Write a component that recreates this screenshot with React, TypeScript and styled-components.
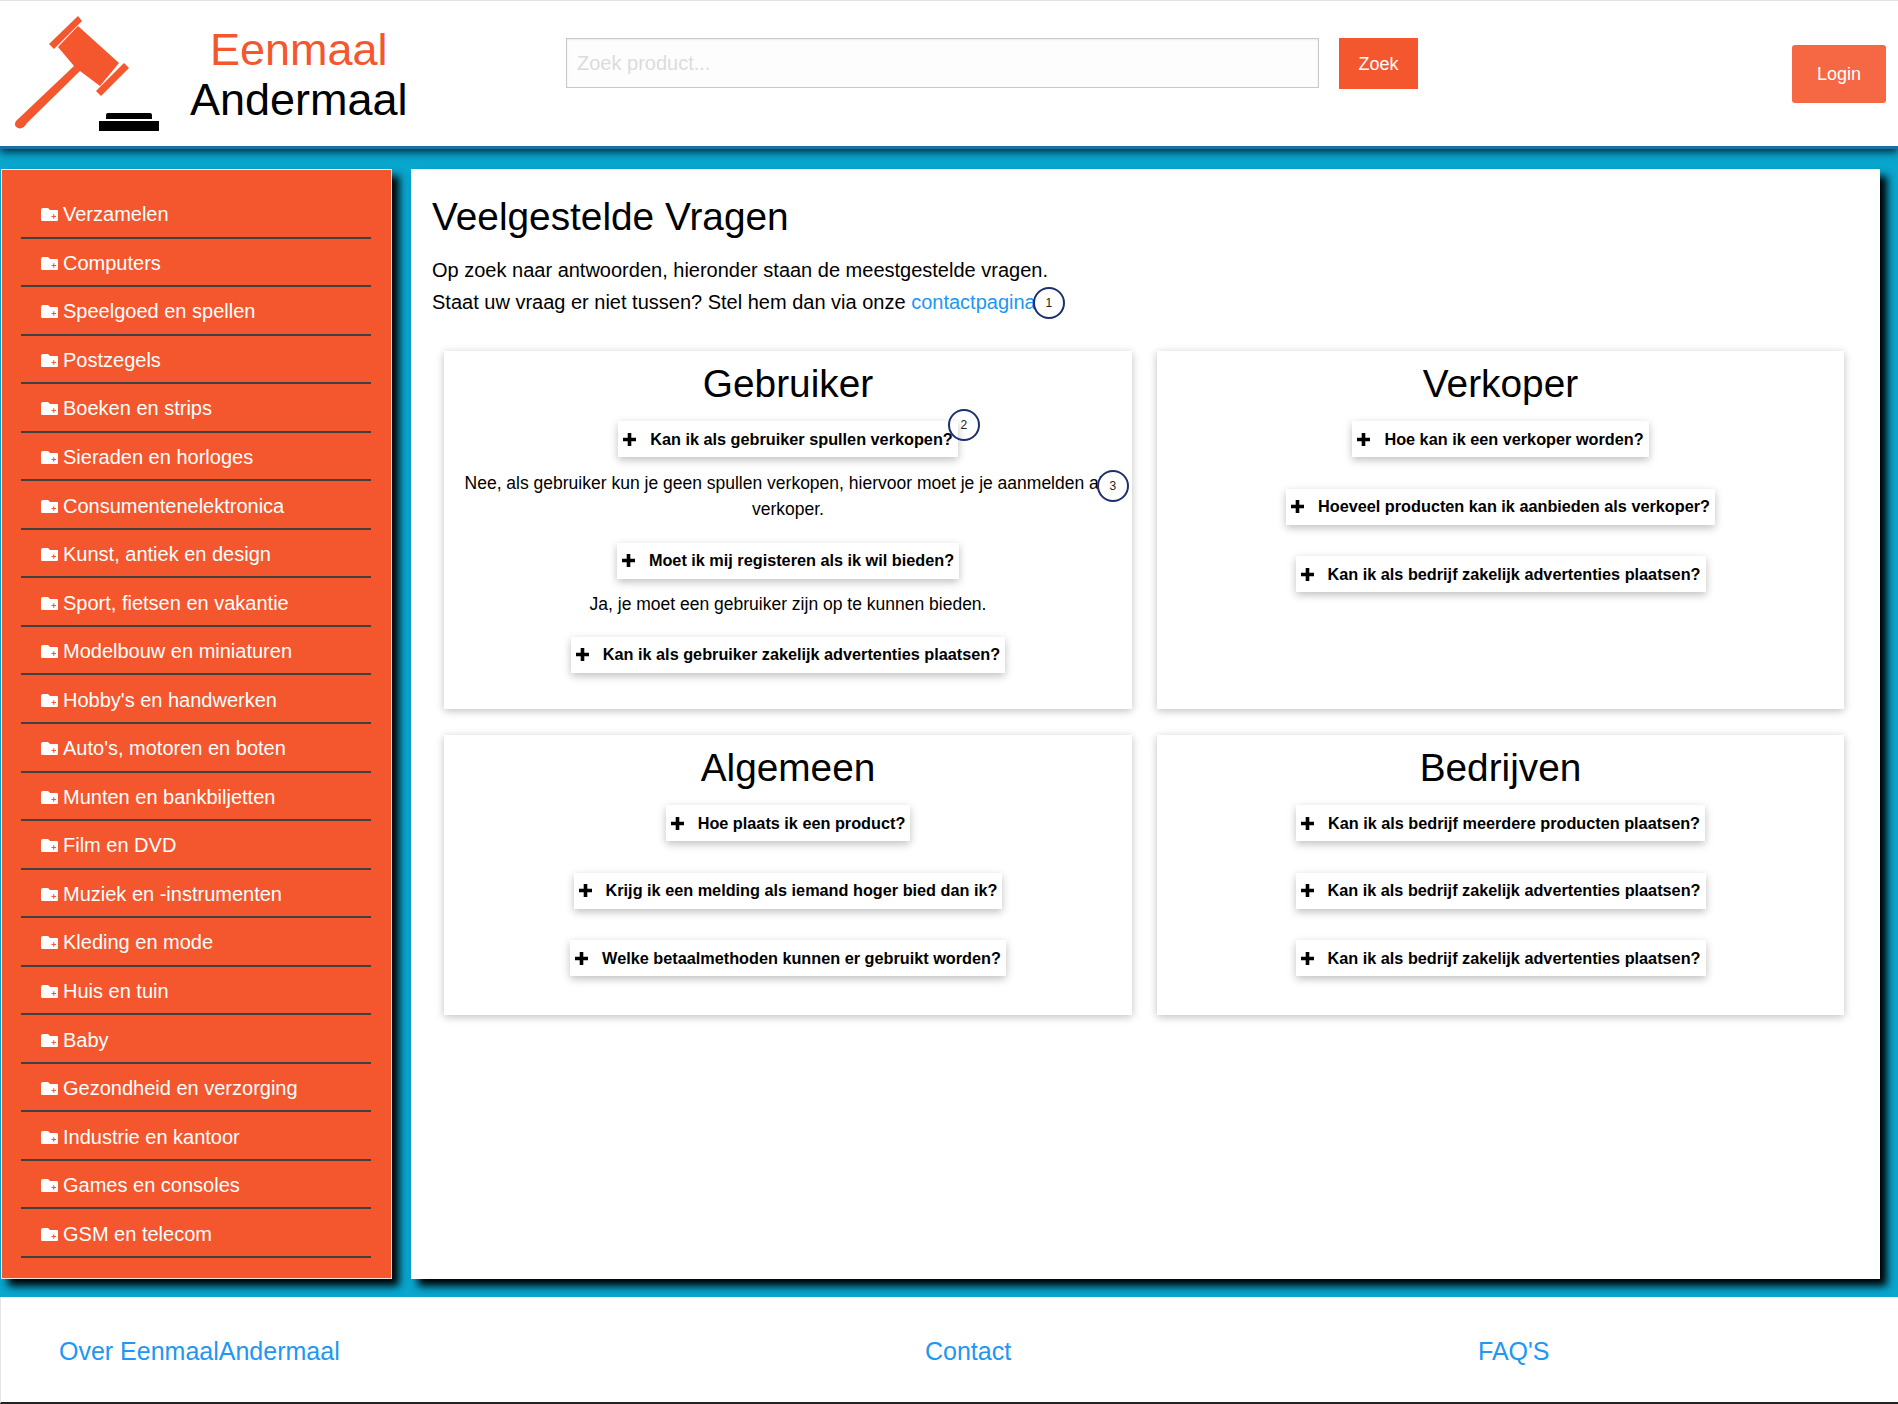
import React from "react";
import styled, { createGlobalStyle } from "styled-components";

const GlobalStyle = createGlobalStyle`
  html, body {
    margin: 0;
    padding: 0;
    background: #fff;
    font-family: "Liberation Sans", Arial, sans-serif;
  }
`;

const Page = styled.div`
  width: 1898px;
  height: 1404px;
  display: flex;
  flex-direction: column;
  overflow: hidden;
`;

const Header = styled.header`
  height: 149px;
  box-sizing: border-box;
  border-top: 1px solid #e2e2e2;
  border-bottom: 3px solid #1e6ea6;
  display: flex;
  align-items: flex-start;
  background: #fff;
  position: relative;
  z-index: 2;
  box-shadow: 0 3px 8px rgba(0, 0, 0, 0.75);
`;

const LogoBlock = styled.div`
  width: 415px;
  height: 141px;
  display: flex;
  flex: none;
`;

const Gavel = styled.svg`
  width: 160px;
  height: 132px;
  flex: none;
`;

const Brand = styled.div`
  margin: 24px 0 0 30px;
  font-size: 45px;
  line-height: 50px;
  text-align: center;
`;

const BrandTop = styled.div`
  color: #f4572d;
`;

const SearchForm = styled.form`
  display: flex;
  align-items: flex-start;
  margin: 37px 0 0 151px;
`;

const SearchInput = styled.input`
  width: 753px;
  height: 50px;
  box-sizing: border-box;
  padding: 0 10px;
  border: 1px solid #c8c8c8;
  background: #fdfdfd;
  box-shadow: inset 0 1px 2px rgba(0, 0, 0, 0.08);
  font-family: inherit;
  font-size: 20px;
  outline: none;
  &::placeholder {
    color: #dcdcdc;
  }
`;

const SearchButton = styled.button`
  width: 79px;
  height: 51px;
  margin-left: 20px;
  padding-top: 2px;
  border: none;
  background: #f4572d;
  color: #fff;
  font-family: inherit;
  font-size: 18px;
`;

const LoginButton = styled.button`
  width: 94px;
  height: 58px;
  margin: 44px 12px 0 auto;
  border: none;
  border-radius: 3px;
  background: #f66844;
  color: #fff;
  font-family: inherit;
  font-size: 18px;
`;

const Body = styled.div`
  height: 1148px;
  box-sizing: border-box;
  padding: 20px 18px 0 1px;
  background: #09a6ce;
  display: flex;
  align-items: flex-start;
  gap: 19px;
`;

const Sidebar = styled.nav`
  width: 391px;
  height: 1110px;
  box-sizing: border-box;
  padding: 20px 20px 0 19px;
  background: #f4572d;
  border: 1px solid #f7e4dc;
  box-shadow: 7px 7px 8px #000;
  flex: none;
`;

const CategoryRow = styled.div`
  height: 48.55px;
  box-sizing: border-box;
  padding: 3px 0 0 20px;
  display: flex;
  align-items: center;
  gap: 5px;
  color: #fff;
  font-size: 20px;
  border-bottom: 2px solid #404040;
`;

const FolderIcon = () => (
  <svg width="17" height="13" viewBox="0 0 17 13">
    <path d="M0 2 Q0 0 2 0 H7 L9 2 H16 Q17 2 17 3 V12 Q17 13 16 13 H1 Q0 13 0 12 Z" fill="#fff" />
    <path d="M10.5 8.5 H15 M12.75 6.2 V10.8" stroke="#f4572d" strokeWidth="1.1" />
  </svg>
);

const PlusIcon = () => (
  <svg width="13" height="13" viewBox="0 0 13 13">
    <path d="M4.7 0 H8.3 V4.7 H13 V8.3 H8.3 V13 H4.7 V8.3 H0 V4.7 H4.7 Z" fill="#000" />
  </svg>
);

const Main = styled.main`
  width: 1469px;
  height: 1110px;
  box-sizing: border-box;
  padding: 25px 21px 0 21px;
  background: #fff;
  box-shadow: 7px 7px 8px #000;
  flex: none;
`;

const PageTitle = styled.h1`
  margin: 0 0 14px;
  font-size: 38.8px;
  line-height: 46px;
  font-weight: 400;
  color: #000;
`;

const Intro = styled.p`
  margin: 0;
  font-size: 20px;
  line-height: 32px;
  color: #000;
`;

const Link = styled.a`
  color: #2196f3;
`;

const Anchor = styled.span`
  position: relative;
`;

const Marker = styled.span<{ $top: number; $left: number }>`
  position: absolute;
  top: ${(p) => p.$top}px;
  left: ${(p) => p.$left}px;
  width: 32px;
  height: 32px;
  box-sizing: border-box;
  border: 2px solid #1c2f6e;
  border-radius: 50%;
  background: #fff;
  display: flex;
  align-items: center;
  justify-content: center;
  font-size: 12px;
  line-height: 1;
  color: #222;
  font-weight: 400;
`;

const QuestionMarker = styled(Marker)`
  left: auto;
  right: -22px;
  background: transparent;
`;

const CardGrid = styled.div`
  display: grid;
  grid-template-columns: 688px 687px;
  grid-template-rows: 358px 280px;
  gap: 26px 25px;
  margin: 33px 0 0 12px;
`;

const Card = styled.section`
  background: #fff;
  box-shadow: 0 2px 8px rgba(0, 0, 0, 0.25);
  padding: 10px 20px 0;
  box-sizing: border-box;
  text-align: center;
`;

const CardTitle = styled.h2`
  margin: 0 0 14px;
  font-size: 38.8px;
  line-height: 46px;
  font-weight: 400;
  color: #000;
`;

const Question = styled.div<{ $open?: boolean }>`
  display: flex;
  justify-content: center;
  margin-bottom: ${(p) => (p.$open ? "12px" : "31.5px")};
`;

const QuestionButton = styled.button`
  position: relative;
  height: 36px;
  padding: 0 5px;
  display: flex;
  align-items: center;
  gap: 14px;
  border: none;
  background: #fff;
  box-shadow: 0 3px 8px rgba(0, 0, 0, 0.25);
  font-family: inherit;
  font-size: 16.25px;
  font-weight: 700;
  color: #000;
  white-space: nowrap;
`;

const Answer = styled.p`
  margin: 0 0 20px;
  font-size: 17.5px;
  line-height: 26.25px;
  color: #000;
  &:first-of-type {
    margin-top: 13px;
  }
`;

const Footer = styled.footer`
  height: 107px;
  box-sizing: border-box;
  border-left: 1px solid #e5e5e5;
  border-bottom: 2px solid #222;
  padding: 39px 0 0 58px;
  display: flex;
  background: #fff;
  font-size: 25px;
  line-height: 30px;
`;

const FooterLink = styled.a<{ $width: number }>`
  width: ${(p) => p.$width}px;
  color: #2196f3;
`;

const categories = [
  "Verzamelen",
  "Computers",
  "Speelgoed en spellen",
  "Postzegels",
  "Boeken en strips",
  "Sieraden en horloges",
  "Consumentenelektronica",
  "Kunst, antiek en design",
  "Sport, fietsen en vakantie",
  "Modelbouw en miniaturen",
  "Hobby's en handwerken",
  "Auto's, motoren en boten",
  "Munten en bankbiljetten",
  "Film en DVD",
  "Muziek en -instrumenten",
  "Kleding en mode",
  "Huis en tuin",
  "Baby",
  "Gezondheid en verzorging",
  "Industrie en kantoor",
  "Games en consoles",
  "GSM en telecom",
];

const QuestionItem = ({ text, marker }: { text: string; marker?: React.ReactNode }) => (
  <QuestionButton type="button">
    <PlusIcon />
    {text}
    {marker}
  </QuestionButton>
);

export default function App() {
  return (
    <Page>
      <GlobalStyle />
      <Header>
        <LogoBlock>
          <Gavel viewBox="0 1 160 132">
            <path d="M78 16 L82 21 L54 49 L49 44 Z" fill="#f4572d" />
            <path d="M78 26 L119 63 L100 86 L80 71 L27 123 Q23 130 18 128 Q13 126 16 121 L74 66 L58 47 Z" fill="#f4572d" />
            <path d="M124 63 L129 68 L101 96 L96 91 Z" fill="#f4572d" />
            <path d="M106 119 V115 Q106 113 108 113 H150 Q152 113 152 115 V119 Z" fill="#000" />
            <rect x="99" y="121" width="60" height="10" fill="#000" />
          </Gavel>
          <Brand>
            <BrandTop>Eenmaal</BrandTop>
            Andermaal
          </Brand>
        </LogoBlock>
        <SearchForm>
          <SearchInput placeholder="Zoek product..." />
          <SearchButton type="button">Zoek</SearchButton>
        </SearchForm>
        <LoginButton type="button">Login</LoginButton>
      </Header>
      <Body>
        <Sidebar>
          {categories.map((name) => (
            <CategoryRow key={name}>
              <FolderIcon />
              {name}
            </CategoryRow>
          ))}
        </Sidebar>
        <Main>
          <PageTitle>Veelgestelde Vragen</PageTitle>
          <Intro>
            Op zoek naar antwoorden, hieronder staan de meestgestelde vragen.
            <br />
            Staat uw vraag er niet tussen? Stel hem dan via onze <Link>contactpagina</Link>
            <Anchor>
              <Marker $top={-4} $left={-3}>1</Marker>
            </Anchor>
          </Intro>
          <CardGrid>
            <Card>
              <CardTitle>Gebruiker</CardTitle>
              <Question $open>
                <QuestionItem
                  text="Kan ik als gebruiker spullen verkopen?"
                  marker={<QuestionMarker $top={-12} $left={0}>2</QuestionMarker>}
                />
              </Question>
              <Answer>
                Nee, als gebruiker kun je geen spullen verkopen, hiervoor moet je je aanmelden a
                <Anchor>
                  <Marker $top={-3} $left={-2}>3</Marker>
                </Anchor>
                ls verkoper.
              </Answer>
              <Question $open>
                <QuestionItem text="Moet ik mij registeren als ik wil bieden?" />
              </Question>
              <Answer>Ja, je moet een gebruiker zijn op te kunnen bieden.</Answer>
              <Question>
                <QuestionItem text="Kan ik als gebruiker zakelijk advertenties plaatsen?" />
              </Question>
            </Card>
            <Card>
              <CardTitle>Verkoper</CardTitle>
              <Question><QuestionItem text="Hoe kan ik een verkoper worden?" /></Question>
              <Question><QuestionItem text="Hoeveel producten kan ik aanbieden als verkoper?" /></Question>
              <Question><QuestionItem text="Kan ik als bedrijf zakelijk advertenties plaatsen?" /></Question>
            </Card>
            <Card>
              <CardTitle>Algemeen</CardTitle>
              <Question><QuestionItem text="Hoe plaats ik een product?" /></Question>
              <Question><QuestionItem text="Krijg ik een melding als iemand hoger bied dan ik?" /></Question>
              <Question><QuestionItem text="Welke betaalmethoden kunnen er gebruikt worden?" /></Question>
            </Card>
            <Card>
              <CardTitle>Bedrijven</CardTitle>
              <Question><QuestionItem text="Kan ik als bedrijf meerdere producten plaatsen?" /></Question>
              <Question><QuestionItem text="Kan ik als bedrijf zakelijk advertenties plaatsen?" /></Question>
              <Question><QuestionItem text="Kan ik als bedrijf zakelijk advertenties plaatsen?" /></Question>
            </Card>
          </CardGrid>
        </Main>
      </Body>
      <Footer>
        <FooterLink $width={866}>Over EenmaalAndermaal</FooterLink>
        <FooterLink $width={553}>Contact</FooterLink>
        <FooterLink $width={200}>FAQ'S</FooterLink>
      </Footer>
    </Page>
  );
}
